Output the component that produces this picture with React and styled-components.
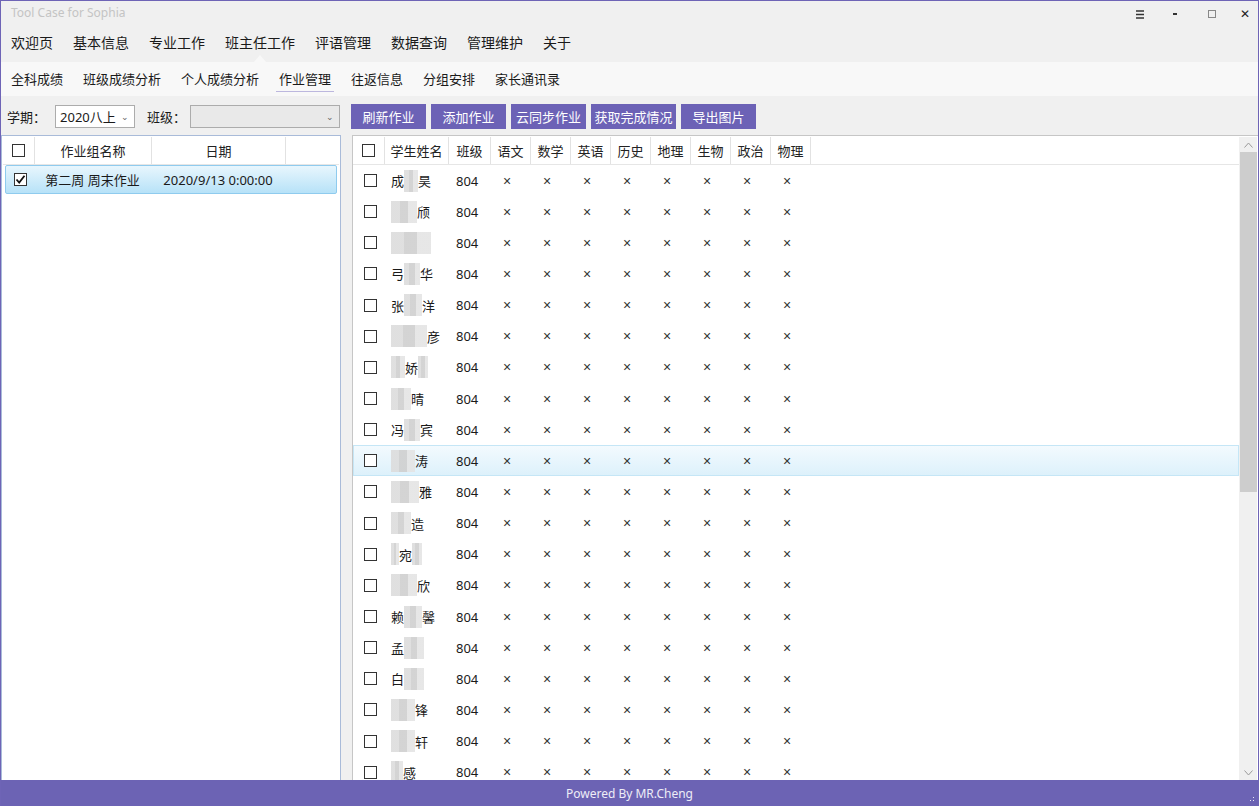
import styled, { createGlobalStyle } from 'styled-components';

const GlobalStyle = createGlobalStyle`
    html, body {
        margin: 0;
        padding: 0;
        background: #f0f0f0;
    }
    * {
        box-sizing: border-box;
    }
`;

const font = `'Noto Sans', 'Noto Sans CJK SC', sans-serif`;

const Window = styled.div`
    width: 1259px;
    height: 806px;
    display: flex;
    flex-direction: column;
    border: 1px solid #6e64b6;
    border-bottom: none;
    background: #f0f0f0;
    font-family: ${font};
    color: #222;
    overflow: hidden;
`;

const TitleBar = styled.div`
    height: 27px;
    display: flex;
    align-items: center;
    justify-content: space-between;
    padding: 0 0 4px 10px;
    font-size: 12px;
    color: #c4c4c4;
`;

const WinControls = styled.div`
    display: flex;
    align-items: center;
    padding-top: 3px;
`;

const WinButton = styled.div`
    width: ${(p) => p.$w}px;
    height: 20px;
    display: flex;
    align-items: center;
    justify-content: center;
    font-family: 'DejaVu Sans', sans-serif;
    font-size: 12px;
    font-weight: 700;
    color: #222;
`;

const MenuBar = styled.div`
    height: 34px;
    display: flex;
    align-items: stretch;
    gap: 20px;
    padding-left: 10px;
    font-size: 14px;
`;

const MenuItem = styled.div`
    position: relative;
    display: flex;
    align-items: center;
    padding-bottom: 6px;
    color: #1a1a1a;

    ${(p) =>
        p.$active &&
        `
        &::after {
            content: '';
            position: absolute;
            left: 50%;
            bottom: 0;
            margin-left: -6px;
            border-left: 6px solid transparent;
            border-right: 6px solid transparent;
            border-bottom: 7px solid #f8f8f8;
        }
    `}
`;

const SubBar = styled.div`
    height: 34px;
    display: flex;
    align-items: center;
    gap: 20px;
    padding-left: 10px;
    background: #f8f8f8;
    font-size: 13px;
`;

const SubItem = styled.div`
    padding: 2px ${(p) => (p.$active ? 3 : 0)}px 3px;
    margin: 0 ${(p) => (p.$active ? -3 : 0)}px;
    border-bottom: 1px solid ${(p) => (p.$active ? '#bcb7de' : 'transparent')};
    color: #1a1a1a;
`;

const Toolbar = styled.div`
    height: 39px;
    display: flex;
    align-items: center;
    padding: 1px 0 0 6px;
    font-size: 13px;
`;

const Label = styled.span`
    margin-right: ${(p) => p.$gap}px;
    color: #1a1a1a;
`;

const Combo = styled.div`
    width: ${(p) => p.$w}px;
    height: 23px;
    border: 1px solid #acacac;
    background: ${(p) => (p.$filled ? '#fff' : '#e9e9e9')};
    display: flex;
    align-items: center;
    justify-content: space-between;
    padding: 0 5px 0 4px;
    margin-right: ${(p) => p.$gap || 0}px;
    font-size: 13px;
    color: #1a1a1a;
`;

const Caret = styled.span`
    font-size: 9px;
    color: #666;
`;

const ButtonGroup = styled.div`
    display: flex;
    gap: 5px;
    margin-left: 11px;
`;

const ToolButton = styled.button`
    width: ${(p) => p.$w}px;
    height: 25px;
    border: none;
    background: #6c62b6;
    color: #fff;
    font-family: ${font};
    font-size: 13px;
    padding: 0;
    cursor: pointer;
`;

const Panels = styled.div`
    flex: 1;
    display: flex;
    min-height: 0;
`;

const LeftPanel = styled.div`
    width: 340px;
    border: 1px solid #a9bbd9;
    border-bottom: none;
    background: #fff;
    padding: 1px 1px 0 1px;
`;

const RightPanel = styled.div`
    flex: 1;
    margin-left: 11px;
    border: 1px solid #c6c6c6;
    border-bottom: none;
    border-right: none;
    background: #fff;
    display: flex;
    min-width: 0;
    padding-top: 1px;
`;

const TableArea = styled.div`
    flex: 1;
    overflow: hidden;
`;

const HeadRow = styled.div`
    display: grid;
    grid-template-columns: ${(p) => p.$cols};
    height: 28px;
    border-bottom: 1px solid #e6e6e6;
    font-size: 13px;
`;

const HeadCell = styled.div`
    display: flex;
    align-items: center;
    justify-content: center;
    border-right: ${(p) => (p.$last ? 'none' : '1px solid #e2e2e2')};
    color: #222;
`;

const Row = styled.div`
    display: grid;
    grid-template-columns: ${(p) => p.$cols};
    height: ${(p) => p.$h || 31.15}px;
    align-items: center;
    font-size: 13px;
    border: 1px solid transparent;

    ${(p) =>
        p.$selected &&
        `
        margin: 0 2px;
        border-color: #8fcbee;
        border-radius: 2px;
        background: linear-gradient(#e8f6fd, #b7e2f8);
    `}

    ${(p) =>
        p.$hover &&
        `
        border-color: #c5e6f6;
        background: linear-gradient(#f3fafe, #ddf1fb);
    `}
`;

const Cell = styled.div`
    display: flex;
    align-items: center;
    justify-content: ${(p) => (p.$pad !== undefined ? 'flex-start' : 'center')};
    padding-left: ${(p) => p.$pad || 0}px;
    color: #1a1a1a;
    white-space: nowrap;
`;

const Mark = styled(Cell)`
    font-family: 'Liberation Sans', 'Noto Sans', sans-serif;
    font-size: 14px;
    color: #333;
`;

const Box = styled.span`
    width: 13px;
    height: 13px;
    border: 1px solid #333;
    background: #fff;
    display: inline-flex;
    align-items: center;
    justify-content: center;
`;

const Blur = styled.span`
    display: inline-block;
    width: ${(p) => p.$w || 20}px;
    height: 22px;
    background: linear-gradient(90deg, #dcdcdc 0 33%, #cfcfcf 33% 66%, #e4e4e4 66%);
    opacity: 0.9;
`;

const Scrollbar = styled.div`
    width: 18px;
    background: #f0f0f0;
    display: flex;
    flex-direction: column;
    align-items: center;
    margin-right: 1px;
`;

const Arrow = styled.div`
    height: 15px;
    display: flex;
    align-items: center;
    justify-content: center;
`;

const Thumb = styled.div`
    width: 17px;
    height: 340px;
    background: #cdcdcd;
`;

const Spacer = styled.div`
    flex: 1;
`;

const Footer = styled.div`
    height: 26px;
    background: #6c63b4;
    color: #eeedf7;
    font-size: 12px;
    display: flex;
    align-items: center;
    justify-content: center;
    position: relative;
    margin: 0 -1px;
`;

const Grip = styled.div`
    position: absolute;
    right: 3px;
    bottom: 3px;
    width: 10px;
    height: 10px;
    background-image: radial-gradient(#e8e8f4 40%, transparent 45%);
    background-size: 3px 3px;
    clip-path: polygon(100% 0, 100% 100%, 0 100%);
`;

const menus = ['欢迎页', '基本信息', '专业工作', '班主任工作', '评语管理', '数据查询', '管理维护', '关于'];
const subs = ['全科成绩', '班级成绩分析', '个人成绩分析', '作业管理', '往返信息', '分组安排', '家长通讯录'];
const subjects = ['语文', '数学', '英语', '历史', '地理', '生物', '政治', '物理'];

const students = [
    ['成', 14, '昊'],
    ['', 26, '颀'],
    ['', 40, ''],
    ['弓', 16, '华'],
    ['张', 18, '洋'],
    ['', 36, '彦'],
    ['', 14, '娇', 10],
    ['', 20, '晴'],
    ['冯', 16, '宾'],
    ['', 24, '涛'],
    ['', 28, '雅'],
    ['', 20, '造'],
    ['', 8, '宛', 10],
    ['', 26, '欣'],
    ['赖', 18, '馨'],
    ['孟', 20, ''],
    ['白', 20, ''],
    ['', 24, '锋'],
    ['', 24, '轩'],
    ['', 12, '感'],
];

const leftCols = '32px 117px 134px 1fr';
const rightCols = '32px 64px 42px repeat(8, 40px) 1fr';

const Check = () => (
    <svg width="11" height="11" viewBox="0 0 11 11">
        <path d="M1.5 5.5 L4.2 8.5 L9.5 1.8" fill="none" stroke="#111" strokeWidth="1.8" />
    </svg>
);

const App = () => {
    return (
        <>
            <GlobalStyle />
            <Window>
                <TitleBar>
                    <span>Tool Case for Sophia</span>
                    <WinControls>
                        <WinButton $w={36}>
                            <svg width="8" height="9" viewBox="0 0 8 9">
                                <path d="M0 1h8M0 4.5h8M0 8h8" stroke="#333" strokeWidth="1.6" />
                            </svg>
                        </WinButton>
                        <WinButton $w={34}>
                            <svg width="4" height="2" viewBox="0 0 4 2">
                                <rect width="4" height="2" fill="#333" />
                            </svg>
                        </WinButton>
                        <WinButton $w={40}>
                            <svg width="8" height="8" viewBox="0 0 8 8">
                                <rect x="0.5" y="0.5" width="7" height="7" fill="none" stroke="#888" />
                            </svg>
                        </WinButton>
                        <WinButton $w={26}>✕</WinButton>
                    </WinControls>
                </TitleBar>
                <MenuBar>
                    {menus.map((m) => (
                        <MenuItem key={m} $active={m === '班主任工作'}>
                            {m}
                        </MenuItem>
                    ))}
                </MenuBar>
                <SubBar>
                    {subs.map((s) => (
                        <SubItem key={s} $active={s === '作业管理'}>
                            {s}
                        </SubItem>
                    ))}
                </SubBar>
                <Toolbar>
                    <Label $gap={9}>学期：</Label>
                    <Combo $w={80} $filled $gap={12}>
                        2020八上 <Caret>⌄</Caret>
                    </Combo>
                    <Label $gap={4}>班级：</Label>
                    <Combo $w={150}>
                        <span />
                        <Caret>⌄</Caret>
                    </Combo>
                    <ButtonGroup>
                        <ToolButton $w={75}>刷新作业</ToolButton>
                        <ToolButton $w={75}>添加作业</ToolButton>
                        <ToolButton $w={75}>云同步作业</ToolButton>
                        <ToolButton $w={85}>获取完成情况</ToolButton>
                        <ToolButton $w={75}>导出图片</ToolButton>
                    </ButtonGroup>
                </Toolbar>
                <Panels>
                    <LeftPanel>
                        <HeadRow $cols={leftCols}>
                            <HeadCell>
                                <Box />
                            </HeadCell>
                            <HeadCell>作业组名称</HeadCell>
                            <HeadCell>日期</HeadCell>
                            <HeadCell $last />
                        </HeadRow>
                        <Row $cols="28px 117px 134px 1fr" $selected $h={29}>
                            <Cell>
                                <Box>
                                    <Check />
                                </Box>
                            </Cell>
                            <Cell>第二周 周末作业</Cell>
                            <Cell>2020/9/13 0:00:00</Cell>
                            <Cell />
                        </Row>
                    </LeftPanel>
                    <RightPanel>
                        <TableArea>
                            <HeadRow $cols={rightCols}>
                                <HeadCell>
                                    <Box />
                                </HeadCell>
                                <HeadCell>学生姓名</HeadCell>
                                <HeadCell>班级</HeadCell>
                                {subjects.map((s) => (
                                    <HeadCell key={s}>{s}</HeadCell>
                                ))}
                                <HeadCell $last />
                            </HeadRow>
                            {students.map(([pre, w, post, tail], i) => (
                                <Row key={i} $cols={rightCols} $hover={i === 9}>
                                    <Cell>
                                        <Box />
                                    </Cell>
                                    <Cell $pad={5}>
                                        {pre}
                                        <Blur $w={w} />
                                        {post}
                                        {tail && <Blur $w={tail} />}
                                    </Cell>
                                    <Cell $pad={6}>804</Cell>
                                    {subjects.map((s) => (
                                        <Mark key={s} $pad={11}>
                                            ×
                                        </Mark>
                                    ))}
                                    <Cell />
                                </Row>
                            ))}
                        </TableArea>
                        <Scrollbar>
                            <Arrow>
                                <svg width="9" height="6" viewBox="0 0 9 6">
                                    <path d="M0.5 5.5 L4.5 1 L8.5 5.5" fill="none" stroke="#9a9a9a" strokeWidth="1" />
                                </svg>
                            </Arrow>
                            <Thumb />
                            <Spacer />
                            <Arrow>
                                <svg width="9" height="6" viewBox="0 0 9 6">
                                    <path d="M0.5 0.5 L4.5 5 L8.5 0.5" fill="none" stroke="#9a9a9a" strokeWidth="1" />
                                </svg>
                            </Arrow>
                        </Scrollbar>
                    </RightPanel>
                </Panels>
                <Footer>
                    Powered By MR.Cheng
                    <Grip />
                </Footer>
            </Window>
        </>
    );
};

export default App;
